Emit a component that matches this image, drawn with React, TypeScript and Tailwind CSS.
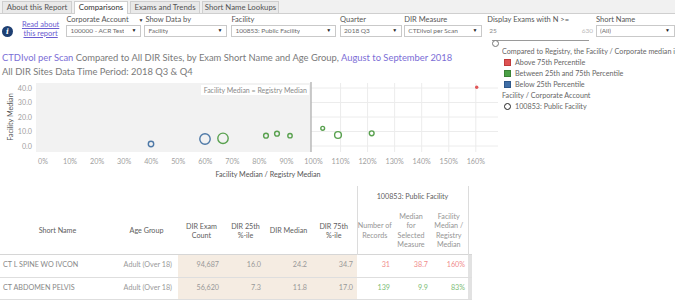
import React from 'react';

const TABS = [
  { label: 'About this Report', w: 'w-[70px]' },
  { label: 'Comparisons', w: 'w-[54px]', active: true },
  { label: 'Exams and Trends', w: 'w-[70px]' },
  { label: 'Short Name Lookups', w: 'w-[77px]' },
];

// scatter points in chart coordinates (svg space)
const POINTS = [
  { x: 151, y: 65, r: 2.7, c: '#4e79a7' },
  { x: 205, y: 60, r: 5.2, c: '#4e79a7' },
  { x: 223, y: 59.3, r: 5.2, c: '#59a14f' },
  { x: 266, y: 56.7, r: 2.4, c: '#59a14f' },
  { x: 277, y: 54.7, r: 2.4, c: '#59a14f' },
  { x: 290, y: 56.7, r: 2.2, c: '#59a14f' },
  { x: 322.7, y: 49.3, r: 1.9, c: '#59a14f' },
  { x: 338, y: 56, r: 3.4, c: '#59a14f' },
  { x: 371.7, y: 54.3, r: 2.4, c: '#59a14f' },
];

const X_TICKS = Array.from({ length: 17 }, (_, i) => i * 10);
const Y_TICKS = [40, 30, 20, 10, 0];

const xPos = (pct: number) => 43 + pct * 2.705;
const yPos = (v: number) => 67 - v * 1.45;

function Dropdown({ value }: { value: string }) {
  return (
    <div className="mt-[1px] flex h-[12px] items-center justify-between border border-[#c9c9c9] bg-white pl-[3px] pr-[4px] text-[6.5px] text-[#6b6b6b]">
      <span className="truncate">{value}</span>
      <span className="text-[5px] text-[#222]">▼</span>
    </div>
  );
}

function Filter({
  label,
  value,
  className,
  caret,
}: {
  label: string;
  value: string;
  className: string;
  caret?: boolean;
}) {
  return (
    <div className={className}>
      <div className="h-[9px] whitespace-nowrap text-[7.5px] leading-[9px] text-[#555]">
        {caret && <span className="-ml-[6px] mr-[2px] text-[5px] text-[#333]">▼</span>}
        {label}
      </div>
      <Dropdown value={value} />
    </div>
  );
}

function FilterRow() {
  return (
    <div className="flex h-[33px] pt-[1px]">
      <div className="ml-[2px] mt-[11px] flex h-[11px] w-[11px] items-center justify-center rounded-full bg-[#1e3f72] font-['DejaVu_Serif',serif] text-[7.5px] font-bold italic text-white">
        i
      </div>
      <a className="ml-[9px] mt-[6px] w-[38px] text-center text-[7.5px] leading-[8.5px] text-[#6a5bd0] underline">
        Read about this report
      </a>
      <Filter className="ml-[7px] w-[76px]" label="Corporate Account" value="100000 - ACR Test" />
      <Filter className="ml-[3px] w-[84px]" label="Show Data by" value="Facility" caret />
      <Filter className="ml-[4px] w-[106px]" label="Facility" value="100853: Public Facility" />
      <Filter className="ml-[4px] w-[63px]" label="Quarter" value="2018 Q3" />
      <Filter className="ml-[2px] w-[79px]" label="DIR Measure" value="CTDIvol per Scan" />
      <div className="ml-[5px] w-[107px]">
        <div className="h-[9px] whitespace-nowrap text-[7.5px] leading-[9px] text-[#555]">
          Display Exams with N &gt;=
        </div>
        <div className="mt-[1px] flex h-[12px] items-center justify-between pl-[2px] text-[6.5px] text-[#888]">
          <span>25</span>
          <span className="text-[#bbb]">630</span>
        </div>
        <div className="relative ml-[5px] mt-[1px] h-[7px] w-[97px]">
          <div className="mt-[3px] h-px w-full bg-[#9a9a9a]" />
          <div className="absolute left-0 top-0 h-[7px] w-[7px] rounded-full border border-[#777] bg-white" />
        </div>
      </div>
      <Filter className="ml-[3px] w-[80px]" label="Short Name" value="(All)" />
    </div>
  );
}

function Chart() {
  return (
    <svg width="500" height="100" className="block font-['Lato',sans-serif]">
      {/* shaded region below 100% */}
      <rect x="36" y="4" width="275" height="69" fill="#f2f2f2" />
      {Y_TICKS.map((v) => (
        <line key={v} x1="311" x2="498" y1={yPos(v)} y2={yPos(v)} stroke="#ececec" strokeWidth="1" />
      ))}
      {X_TICKS.filter((p) => p > 100).map((p) => (
        <line key={p} x1={xPos(p)} x2={xPos(p)} y1="4" y2="73" stroke="#ececec" strokeWidth="1" />
      ))}
      <line x1="311" x2="311" y1="3" y2="73" stroke="#b5b5b5" strokeWidth="1.4" />
      <rect x="201" y="6" width="108" height="10" fill="#ffffff" />
      <text x="307" y="13.5" textAnchor="end" fontSize="7" fill="#8a8a8a">
        Facility Median = Registry Median
      </text>
      {Y_TICKS.map((v) => (
        <text key={v} x="32" y={yPos(v) + 2.5} textAnchor="end" fontSize="7.2" fill="#a0a0a0">
          {v.toFixed(1)}
        </text>
      ))}
      {X_TICKS.map((p) => (
        <text key={p} x={xPos(p)} y="84.5" textAnchor="middle" fontSize="7.2" fill="#a0a0a0">
          {p}%
        </text>
      ))}
      <text
        x="0"
        y="0"
        transform="translate(12.5 38) rotate(-90)"
        textAnchor="middle"
        fontSize="7.2"
        fill="#555"
      >
        Facility Median
      </text>
      <text x="268" y="97.5" textAnchor="middle" fontSize="7.2" fill="#555">
        Facility Median / Registry Median
      </text>
      {POINTS.map((p, i) => (
        <circle key={i} cx={p.x} cy={p.y} r={p.r} fill="none" stroke={p.c} strokeWidth="1.4" />
      ))}
      <circle cx="476.7" cy="8.3" r="1.7" fill="#e15759" />
    </svg>
  );
}

function LegendSwatch({ bg, border, label }: { bg: string; border: string; label: string }) {
  return (
    <div className="flex h-[11px] items-center">
      <div className={`ml-[2px] h-[7px] w-[7px] border ${bg} ${border}`} />
      <span className="ml-[4px]">{label}</span>
    </div>
  );
}

function Legend() {
  return (
    <div className="ml-[2px] min-w-0 flex-1 overflow-hidden whitespace-nowrap text-[7.2px] leading-[10px] text-[#666]">
      <div className="h-[10px]">Compared to Registry, the Facility / Corporate median is</div>
      <LegendSwatch bg="bg-[#de5252]" border="border-[#bf3c3c]" label="Above 75th Percentile" />
      <LegendSwatch bg="bg-[#4aa045]" border="border-[#3a8235]" label="Between 25th and 75th Percentile" />
      <LegendSwatch bg="bg-[#3f6ea6]" border="border-[#2e578a]" label="Below 25th Percentile" />
      <div className="mt-[1px] h-[10px]">Facility / Corporate Account</div>
      <div className="flex h-[11px] items-center">
        <div className="ml-[2px] h-[7px] w-[7px] rounded-full border-[1.5px] border-[#222]" />
        <span className="ml-[4px]">100853: Public Facility</span>
      </div>
    </div>
  );
}

const ROWS = [
  {
    name: 'CT L SPINE WO IVCON',
    age: 'Adult (Over 18)',
    count: '94,687',
    p25: '16.0',
    med: '24.2',
    p75: '34.7',
    n: '31',
    fmed: '38.7',
    ratio: '160%',
    tone: 'text-[#f08c8c]',
  },
  {
    name: 'CT ABDOMEN PELVIS',
    age: 'Adult (Over 18)',
    count: '56,620',
    p25: '7.3',
    med: '11.8',
    p75: '17.0',
    n: '139',
    fmed: '9.9',
    ratio: '83%',
    tone: 'text-[#7dbd76]',
  },
];

function SummaryTable() {
  const head = 'text-center align-middle font-normal text-[#606060] leading-[9px]';
  const sub = 'text-center align-middle font-normal text-[#959595] leading-[9.3px]';
  const beige = 'bg-[#f5ece2] text-right text-[#999]';
  return (
    <table className="mt-[7px] table-fixed border-collapse text-[7.2px]">
      <colgroup>
        <col className="w-[115px]" />
        <col className="w-[63px]" />
        <col className="w-[47px]" />
        <col className="w-[41px]" />
        <col className="w-[45px]" />
        <col className="w-[46px]" />
        <col className="w-[35px]" />
        <col className="w-[38px]" />
        <col className="w-[38px]" />
        <col className="w-[4px]" />
      </colgroup>
      <thead>
        <tr className="h-[22px]">
          <th colSpan={6} />
          <th colSpan={3} className="border-x border-[#dcdcdc] text-center align-middle font-normal text-[#606060]">
            100853: Public Facility
          </th>
          <th />
        </tr>
        <tr className="h-[46px] border-b border-[#d6d6d6]">
          <th className={head}>Short Name</th>
          <th className={head}>Age Group</th>
          <th className={head}>
            DIR Exam
            <br />
            Count
          </th>
          <th className={head}>
            DIR 25th
            <br />
            %-ile
          </th>
          <th className={head}>DIR Median</th>
          <th className={head}>
            DIR 75th
            <br />
            %-ile
          </th>
          <th className={`${sub} border-l border-[#dcdcdc]`}>
            Number of
            <br />
            Records
          </th>
          <th className={sub}>
            Median
            <br />
            for
            <br />
            Selected
            <br />
            Measure
          </th>
          <th className={`${sub} border-r border-[#dcdcdc]`}>
            Facility
            <br />
            Median /
            <br />
            Registry
            <br />
            Median
          </th>
          <th />
        </tr>
      </thead>
      <tbody>
        {ROWS.map((r, i) => (
          <tr key={r.name} className={`${i === 0 ? 'h-[23px]' : 'h-[22px]'} border-b border-[#dedede]`}>
            <td className="pl-[3px] text-[#888]">{r.name}</td>
            <td className="pr-[6px] text-right text-[#999]">{r.age}</td>
            <td className={`${beige} pr-[6px]`}>{r.count}</td>
            <td className={`${beige} pr-[5px]`}>{r.p25}</td>
            <td className={`${beige} pr-[4px]`}>{r.med}</td>
            <td className={`${beige} pr-[4px]`}>{r.p75}</td>
            <td className={`pr-[2px] text-right ${r.tone}`}>{r.n}</td>
            <td className={`pr-[2px] text-right ${r.tone}`}>{r.fmed}</td>
            <td className={`pr-[3px] text-right ${r.tone}`}>{r.ratio}</td>
            <td className="bg-[#e2e2e2]" />
          </tr>
        ))}
      </tbody>
    </table>
  );
}

export default function App() {
  return (
    <div className="h-[300px] w-[675px] overflow-hidden bg-white font-['Lato',sans-serif] text-[#555]">
      <div className="flex h-[14px] items-end gap-[2px] border-b border-[#cfcfcf] bg-[#f1f1f1] pl-[2px]">
        {TABS.map((t) => (
          <div
            key={t.label}
            className={`${t.w} flex h-[12px] items-center justify-center border border-b-0 border-[#cfcfcf] text-[7.8px] ${
              t.active ? '-mb-px h-[13px] bg-white text-[#333]' : 'bg-[#e9e9e9] text-[#555]'
            }`}
          >
            {t.label}
          </div>
        ))}
      </div>
      <FilterRow />
      <div className="flex">
        <div className="w-[500px] shrink-0">
          <div className="mt-[4px] h-[28px] whitespace-nowrap pl-[2px] text-[9.4px] leading-[14px] text-[#7a7a7a]">
            <div>
              <span className="text-[#7b6ed6]">CTDIvol per Scan</span> Compared to All DIR Sites, by Exam Short Name
              and Age Group, <span className="text-[#7b6ed6]">August to September 2018</span>
            </div>
            <div>All DIR Sites Data Time Period: 2018 Q3 &amp; Q4</div>
          </div>
          <Chart />
        </div>
        <Legend />
      </div>
      <SummaryTable />
    </div>
  );
}
